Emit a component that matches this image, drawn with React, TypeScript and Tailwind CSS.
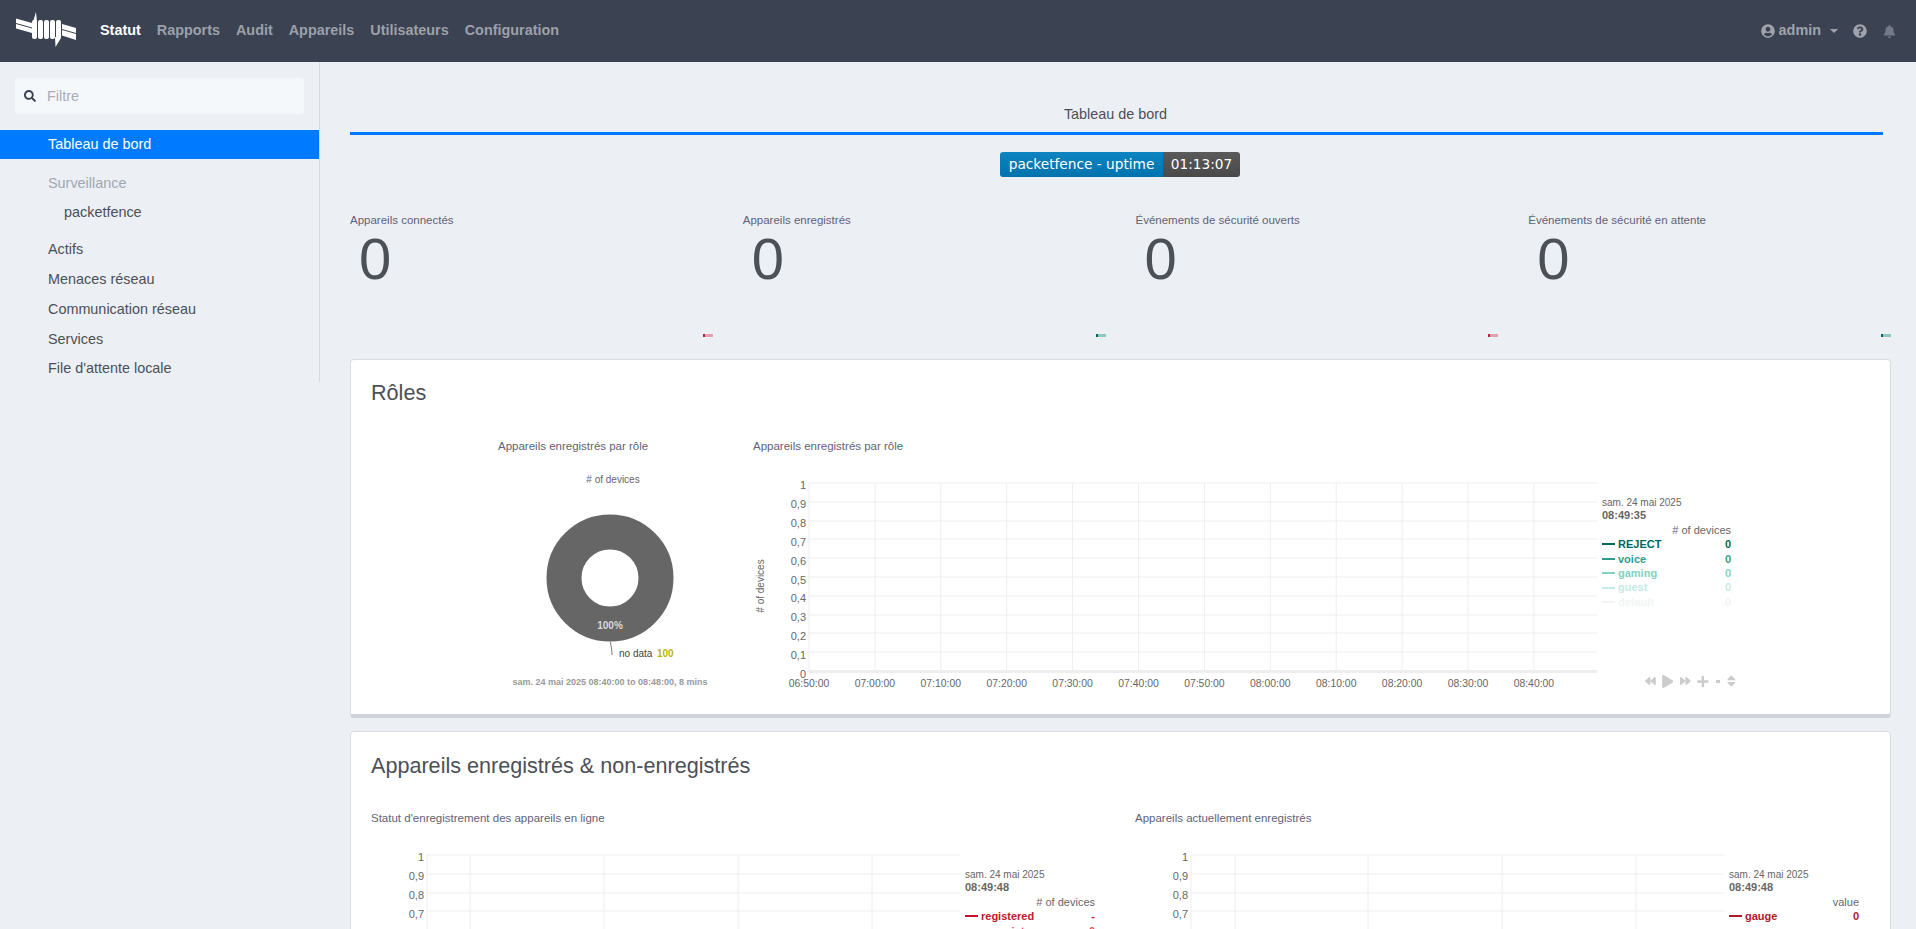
import { FaBackward, FaBell, FaForward, FaPlay, FaPlus, FaQuestionCircle, FaSearch, FaSort, FaUserCircle } from "react-icons/fa"

type LegendRow = {
  name: string
  value: string
  color: string
}

type LineChartProps = {
  width: number
  plotLeft: number
  verticals: number[]
  ticks?: { x: number; label: string }[]
  axisLabel?: boolean
}

const yLabels = ["1", "0,9", "0,8", "0,7", "0,6", "0,5", "0,4", "0,3", "0,2", "0,1", "0"]
const yLines = [13, 32, 51, 69, 88, 107, 126, 145, 163, 182]

const navLinks = ["Rapports", "Audit", "Appareils", "Utilisateurs", "Configuration"]
const sideLinks = ["Actifs", "Menaces réseau", "Communication réseau", "Services", "File d'attente locale"]

const stats = [
  { label: "Appareils connectés", dark: "#b2243f", light: "#e0a3ae" },
  { label: "Appareils enregistrés", dark: "#00695c", light: "#8fc7bf" },
  { label: "Événements de sécurité ouverts", dark: "#b2243f", light: "#e0a3ae" },
  { label: "Événements de sécurité en attente", dark: "#00695c", light: "#8fc7bf" },
]

const roleRows: LegendRow[] = [
  { name: "REJECT", value: "0", color: "#00695c" },
  { name: "voice", value: "0", color: "#2f9c8e" },
  { name: "gaming", value: "0", color: "#80d3c1" },
  { name: "guest", value: "0", color: "#c4ece4" },
  { name: "default", value: "0", color: "#f1f5f4" },
]

const roleTicks = [
  "06:50:00", "07:00:00", "07:10:00", "07:20:00", "07:30:00", "07:40:00", "07:50:00",
  "08:00:00", "08:10:00", "08:20:00", "08:30:00", "08:40:00",
].map((label, i) => ({ x: 56 + i * 65.9, label }))

function Logo() {
  return (
    <svg width="62" height="38" viewBox="0 0 62 38" fill="white" className="shrink-0">
      <path d="M1 6.500 L17 11 V15.500 L1 11 Z" />
      <path d="M1 12 L17 16.500 V21 L1 16.500 Z" />
      <path d="M47 12 L61 16 V21 L47 17 Z" />
      <path d="M47 18 L61 22 V28 L47 23.500 Z" />
      <path d="M18 10 L21 0 L22 10 Z" />
      <path d="M40 25 L40.500 35 L46 26 Z" />
      <rect x="17" y="8" width="5" height="19" rx="2" />
      <rect x="23" y="8" width="5" height="19" rx="2" />
      <rect x="29" y="8" width="5" height="19" rx="2" />
      <rect x="35" y="8" width="5" height="19" rx="2" />
      <rect x="41" y="8" width="5" height="19" rx="2" />
    </svg>
  )
}

function LineChart({ width, plotLeft, verticals, ticks, axisLabel }: LineChartProps) {
  return (
    <svg width={width} height="225" className="shrink-0">
      {yLines.map((y) => (
        <line key={y} x1={plotLeft} x2={width} y1={y} y2={y} stroke="#eeeeee" />
      ))}
      <line x1={plotLeft} x2={plotLeft} y1="13" y2="202" stroke="#eeeeee" />
      {verticals.map((x) => (
        <line key={x} x1={x} x2={x} y1="13" y2="202" stroke="#eeeeee" />
      ))}
      <line x1={plotLeft} x2={width} y1="201.500" y2="201.500" stroke="#eeeeee" strokeWidth="3" />
      {yLabels.map((label, i) => (
        <text key={label} x={plotLeft - 3} y={i * 18.9 + 19} textAnchor="end" fontSize="11" fill="#666666">
          {label}
        </text>
      ))}
      {ticks?.map((t) => (
        <text key={t.label} x={t.x} y="217" textAnchor="middle" fontSize="10.400" fill="#666666">
          {t.label}
        </text>
      ))}
      {axisLabel && (
        <text transform="translate(11 116) rotate(-90)" textAnchor="middle" fontSize="10" fill="#666666">
          # of devices
        </text>
      )}
    </svg>
  )
}

function Legend({ time, unit, rows, width }: { time: string; unit: string; rows: LegendRow[]; width: string }) {
  return (
    <div className={`${width} text-[11px] leading-[14.400px] text-[#666666]`}>
      <div className="text-[10px] leading-[13.400px]">sam. 24 mai 2025</div>
      <div className="font-bold leading-[13.400px]">{time}</div>
      <div className="text-right">{unit}</div>
      {rows.map((r) => (
        <div key={r.name} className="flex items-center font-bold" style={{ color: r.color }}>
          <span className="mr-[3px] h-[2px] w-[13px]" style={{ backgroundColor: r.color }} />
          <span className="flex-1">{r.name}</span>
          <span>{r.value}</span>
        </div>
      ))}
    </div>
  )
}

export default function App() {
  return (
    <div className="flex h-screen flex-col overflow-hidden bg-[#eceff4] font-['Liberation_Sans',Arial,sans-serif] text-[#4c566a]">
      {/* Top bar */}
      <header className="flex h-[62px] shrink-0 items-center bg-[#3b4252] pl-[15px] pr-[20px]">
        <Logo />
        <nav className="ml-[23px] flex gap-[16px] text-[14.400px] font-bold text-[#9da0a9]">
          <span className="text-white">Statut</span>
          {navLinks.map((l) => (
            <span key={l}>{l}</span>
          ))}
        </nav>
        <div className="ml-auto flex items-center text-[#a0a3ab]">
          <FaUserCircle size={14} className="mt-[1px]" />
          <span className="ml-[4px] text-[14.400px] font-bold">admin</span>
          <span className="ml-[9px] h-0 w-0 border-x-[4px] border-t-[4px] border-x-transparent border-t-[#a0a3ab]" />
          <FaQuestionCircle size={14} className="ml-[15px] mt-[1px]" />
          <FaBell size={13} className="ml-[16px] mt-[1px] text-[#74798a]" />
        </div>
      </header>

      <div className="flex min-h-0 flex-1">
        {/* Side menu */}
        <aside className="h-[320px] w-[320px] shrink-0 self-start border-r border-[#d5d8de] pt-[16px] text-[14.400px] leading-[29.700px] text-[#4b5059]">
          <div className="mx-[15px] flex h-[36px] items-center rounded-[3px] bg-[#f5f8fb] pl-[9px]">
            <FaSearch size={12} className="text-[#3b4252]" />
            <span className="ml-[11px] mt-[2px] text-[#a9adb5]">Filtre</span>
          </div>
          <div className="mt-[16px] h-[29px] bg-[#007bff] pl-[48px] leading-[28px] text-white">Tableau de bord</div>
          <div className="mt-[10px] pl-[48px] text-[#a3a7af]">Surveillance</div>
          <div className="-mt-[1px] pl-[64px]">packetfence</div>
          <div className="mt-[8px] pl-[48px]">
            {sideLinks.map((l) => (
              <div key={l}>{l}</div>
            ))}
          </div>
        </aside>

        <main className="min-w-0 flex-1 overflow-hidden pl-[30px] pr-[25px]">
          {/* Tabs */}
          <div className="mr-[8px] mt-[41px] border-b-[3px] border-[#007bff] pb-[7px] pr-[2px] text-center text-[14.400px] leading-[22px] text-[#4c5057]">
            Tableau de bord
          </div>

          {/* Uptime badge */}
          <div className="mt-[17px] flex justify-center pr-[1px] font-['DejaVu_Sans',sans-serif] text-[13.700px] leading-[25px] text-white">
            <span className="w-[163px] rounded-l-[3px] bg-gradient-to-b from-[#0d84c0] to-[#0073ad] text-center">
              packetfence - uptime
            </span>
            <span className="w-[77px] rounded-r-[3px] bg-gradient-to-b from-[#5a5a5a] to-[#494949] text-center">
              01:13:07
            </span>
          </div>

          {/* Counters */}
          <div className="mt-[35px] grid grid-cols-4 gap-x-[30px]">
            {stats.map((s) => (
              <div key={s.label} className="flex h-[125px] flex-col">
                <div className="text-[11.500px] leading-[16px] text-[#5e6377]">{s.label}</div>
                <div className="ml-[9px] mt-[1px] text-[58px] leading-[60px] text-[#4c5057]">0</div>
                <div className="mt-auto flex justify-end">
                  <span className="h-[3px] w-[2px]" style={{ backgroundColor: s.dark }} />
                  <span className="h-[3px] w-[8px]" style={{ backgroundColor: s.light }} />
                </div>
              </div>
            ))}
          </div>

          {/* Rôles */}
          <section className="mt-[22px] h-[359px] rounded-[4px] border border-b-[4px] border-[#d8dbe0] border-b-[#d0d4da] bg-white pl-[20px] pt-[19px]">
            <h2 className="text-[21.600px] leading-[28px] text-[#4c5057]">Rôles</h2>
            <div className="mt-[31px] flex">
              <div className="w-[382px] shrink-0">
                <div className="pl-[127px] text-[11.500px] leading-[16px] text-[#5e6377]">Appareils enregistrés par rôle</div>
                <svg width="382" height="232" className="mt-[16px]">
                  <text x="242" y="13" textAnchor="middle" fontSize="10" fill="#666666">
                    # of devices
                  </text>
                  <circle cx="239" cy="108" r="46" fill="none" stroke="#666666" strokeWidth="35" />
                  <text x="239" y="159" textAnchor="middle" fontSize="10" fontWeight="bold" fill="#d8d8d8">
                    100%
                  </text>
                  <path d="M239.500 172 C240 177 241 179 241 185" fill="none" stroke="#777777" />
                  <text x="248" y="187" fontSize="10" fill="#444444">
                    no data
                  </text>
                  <text x="286" y="187" fontSize="10" fontWeight="bold" fill="#b5b516">
                    100
                  </text>
                  <text x="239" y="215" textAnchor="middle" fontSize="9" fontWeight="bold" fill="#999999">
                    sam. 24 mai 2025 08:40:00 to 08:48:00, 8 mins
                  </text>
                </svg>
              </div>
              <div className="min-w-0">
                <div className="text-[11.500px] leading-[16px] text-[#5e6377]">Appareils enregistrés par rôle</div>
                <div className="mt-[16px] flex">
                  <LineChart width={844} plotLeft={56} verticals={roleTicks.slice(1).map((t) => t.x)} ticks={roleTicks} axisLabel />
                  <div className="ml-[5px] flex h-[218px] w-[136px] flex-col justify-between pt-[26px]">
                    <Legend time="08:49:35" unit="# of devices" rows={roleRows} width="w-[129px]" />
                    <div className="flex items-center pl-[43px] text-[#cccccc]">
                      <FaBackward size={12} />
                      <FaPlay size={13} className="ml-[6px]" />
                      <FaForward size={12} className="ml-[7px]" />
                      <FaPlus size={13} className="ml-[6px]" />
                      <span className="ml-[7px] h-[3px] w-[5px] bg-[#cccccc]" />
                      <FaSort size={14} className="ml-[5px]" />
                    </div>
                  </div>
                </div>
              </div>
            </div>
          </section>

          {/* Appareils enregistrés & non-enregistrés */}
          <section className="mt-[13px] rounded-[4px] border border-[#d8dbe0] bg-white pl-[20px] pt-[20px]">
            <h2 className="text-[21.600px] leading-[28px] text-[#4c5057]">Appareils enregistrés &amp; non-enregistrés</h2>
            <div className="mt-[30px] flex">
              <div className="w-[764px] shrink-0">
                <div className="text-[11.500px] leading-[16px] text-[#5e6377]">Statut d'enregistrement des appareils en ligne</div>
                <div className="mt-[16px] flex">
                  <LineChart width={589} plotLeft={56} verticals={[99, 233, 367, 501]} />
                  <div className="ml-[5px] pt-[26px]">
                    <Legend
                      time="08:49:48"
                      unit="# of devices"
                      width="w-[130px]"
                      rows={[
                        { name: "registered", value: "-", color: "#c2142e" },
                        { name: "unregiste", value: "0", color: "#e8505c" },
                      ]}
                    />
                  </div>
                </div>
              </div>
              <div className="min-w-0">
                <div className="text-[11.500px] leading-[16px] text-[#5e6377]">Appareils actuellement enregistrés</div>
                <div className="mt-[16px] flex">
                  <LineChart width={589} plotLeft={56} verticals={[100, 233, 367, 501]} />
                  <div className="ml-[5px] pt-[26px]">
                    <Legend
                      time="08:49:48"
                      unit="value"
                      width="w-[130px]"
                      rows={[{ name: "gauge", value: "0", color: "#b2182b" }]}
                    />
                  </div>
                </div>
              </div>
            </div>
          </section>
        </main>
      </div>
    </div>
  )
}
